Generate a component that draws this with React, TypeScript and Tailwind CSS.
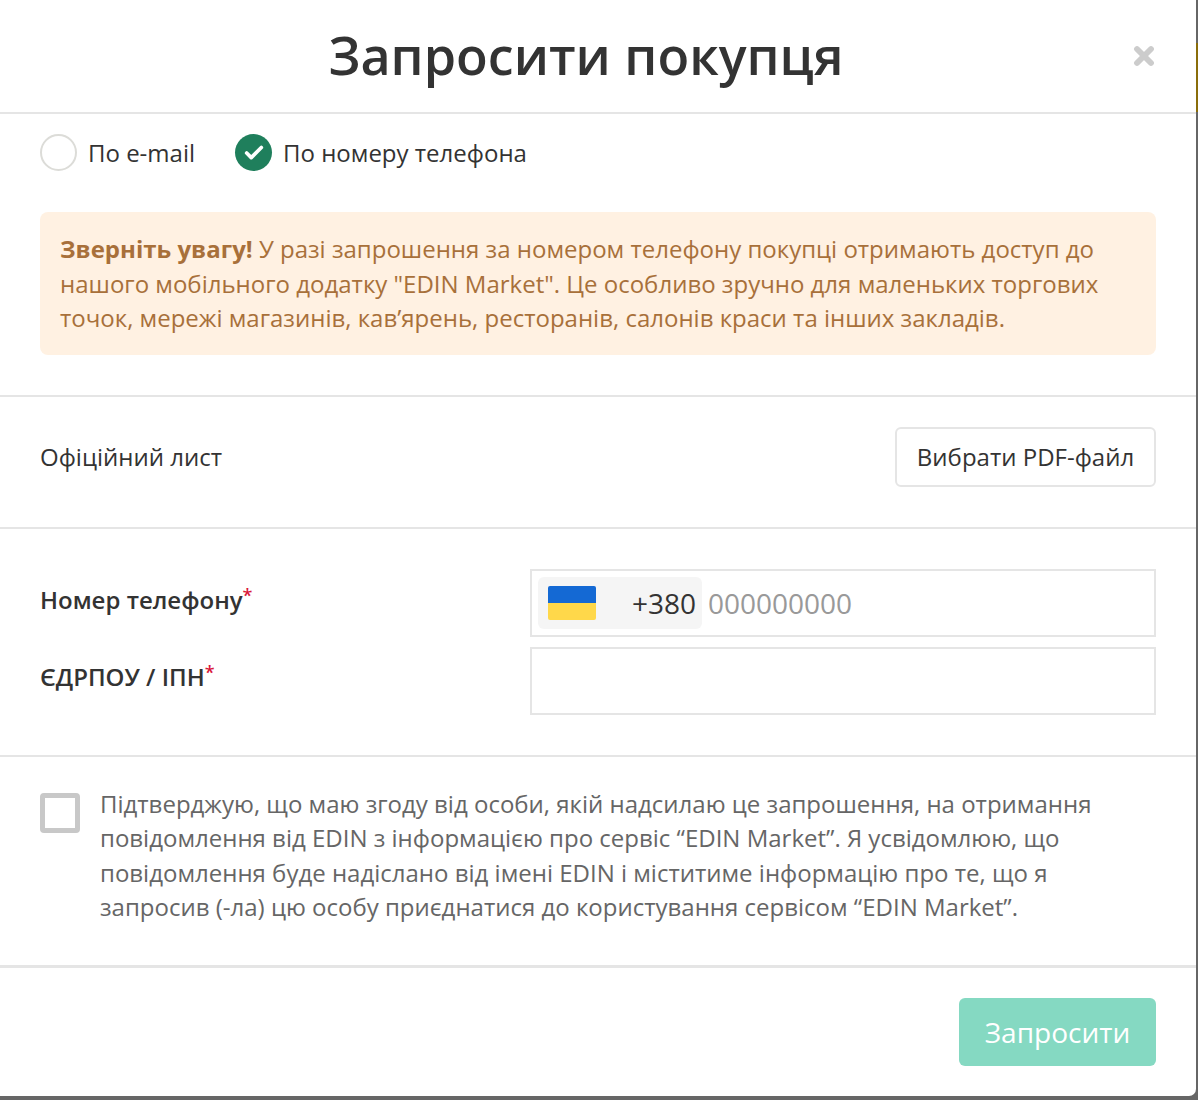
import { Check, X } from 'lucide-react';

function Required() {
  return <span className="relative top-[-7px] text-[18px] leading-none font-semibold text-[#d9183b]">*</span>;
}

export default function App() {
  return (
    <div className="flex h-[1100px] w-[1198px] items-start overflow-hidden bg-[#666666] font-['Open_Sans',sans-serif]">
      <div className="flex h-[1096px] w-[1196px] flex-col rounded-br-[7px] bg-white text-[#333333]">
        {/* Header */}
        <div className="relative flex h-[114px] shrink-0 items-center justify-center border-b-2 border-[#e5e5e5] pr-[24px] pb-[2px]">
          <h2 className="text-[52px] leading-[68px] font-semibold">Запросити покупця</h2>
          <X className="absolute top-[42px] right-[38px] h-[28px] w-[28px] text-[#cccccc]" strokeWidth={5} />
        </div>

        {/* Invite type */}
        <div className="flex h-[98px] shrink-0 items-start gap-[40px] px-[40px] pt-[19px]">
          <label className="flex items-start gap-[11px] text-[24px] leading-[40px] text-[#333333]">
            <span className="mt-[1px] h-[37px] w-[37px] rounded-full border-2 border-[#dcdcd8] bg-white" />
            По e-mail
          </label>
          <label className="flex items-start gap-[11px] text-[24px] leading-[40px] text-[#333333]">
            <span className="mt-[1px] flex h-[37px] w-[37px] items-center justify-center rounded-full bg-[#1f7f5c]">
              <Check className="h-[22px] w-[22px] text-white" strokeWidth={4} />
            </span>
            По номеру телефона
          </label>
        </div>

        {/* Notice */}
        <div className="shrink-0 border-b-2 border-[#e5e5e5] px-[40px] pb-[40px]">
          <div className="h-[143px] rounded-[8px] bg-[#fff1e2] px-[20px] pt-[20px] text-[24px] leading-[34.6px] text-[#a8703a]">
            <strong className="font-bold">Зверніть увагу!</strong> У разі запрошення за номером телефону покупці отримають доступ до
            <br />
            нашого мобільного додатку "EDIN Market". Це особливо зручно для маленьких торгових
            <br />
            точок, мережі магазинів, кав’ярень, ресторанів, салонів краси та інших закладів.
          </div>
        </div>

        {/* Letter */}
        <div className="h-[132px] shrink-0 border-b-2 border-[#e5e5e5] px-[40px] pt-[30px]">
          <div className="flex items-center justify-between">
            <span className="text-[24px]">Офіційний лист</span>
            <button className="h-[60px] w-[261px] rounded-[6px] border-2 border-[#e5e5e5] bg-white text-[24px] text-[#333333]">
              Вибрати PDF-файл
            </button>
          </div>
        </div>

        {/* Fields */}
        <div className="flex h-[228px] shrink-0 flex-col gap-[10px] border-b-2 border-[#e5e5e5] px-[40px] pt-[40px]">
          <div className="flex h-[68px] items-start">
            <label className="w-[490px] pt-[11px] text-[24px] leading-[40px] font-semibold">
              Номер телефону
              <Required />
            </label>
            <div className="flex h-[68px] flex-1 items-center border-2 border-[#e5e5e5] px-[6px]">
              <div className="flex h-[52px] w-[164px] items-center justify-between rounded-[6px] bg-[#f5f5f5] pr-[6px] pl-[10px]">
                <span className="flex h-[34px] w-[48px] flex-col overflow-hidden rounded-[2px]">
                  <span className="flex-1 bg-[#1469d4]" />
                  <span className="flex-1 bg-[#ffd84a]" />
                </span>
                <span className="text-[28px] text-[#333333]">+380</span>
              </div>
              <span className="ml-[6px] text-[28px] text-[#999999]">000000000</span>
            </div>
          </div>
          <div className="flex h-[68px] items-start">
            <label className="w-[490px] pt-[10px] text-[24px] leading-[40px] font-semibold">
              ЄДРПОУ / ІПН
              <Required />
            </label>
            <div className="h-[68px] flex-1 border-2 border-[#e5e5e5]" />
          </div>
        </div>

        {/* Consent */}
        <div className="flex h-[211px] shrink-0 items-start gap-[20px] border-b-[3px] border-[#e5e5e5] px-[40px] pt-[29.7px]">
          <span className="mt-[6px] h-[40px] w-[40px] shrink-0 rounded-[4px] border-[5px] border-[#c8c8c8] bg-white" />
          <p className="text-[24px] leading-[34.5px] text-[#666666]">
            Підтверджую, що маю згоду від особи, якій надсилаю це запрошення, на отримання
            <br />
            повідомлення від EDIN з інформацією про сервіс “EDIN Market”. Я усвідомлюю, що
            <br />
            повідомлення буде надіслано від імені EDIN і міститиме інформацію про те, що я
            <br />
            запросив (-ла) цю особу приєднатися до користування сервісом “EDIN Market”.
          </p>
        </div>

        {/* Footer */}
        <div className="flex flex-1 items-start justify-end px-[40px] pt-[30px]">
          <button className="h-[68px] w-[197px] rounded-[6px] bg-[#85d9c2] text-[28px] text-white">Запросити</button>
        </div>
      </div>

      {/* Backdrop behind the modal */}
      <div className="flex h-full w-[2px] shrink-0 flex-col">
        <div className="h-[43px] bg-[#666666]" />
        <div className="h-[69px] bg-[#8a6d0a]" />
        <div className="flex-1 bg-[#666666]" />
      </div>
    </div>
  );
}
